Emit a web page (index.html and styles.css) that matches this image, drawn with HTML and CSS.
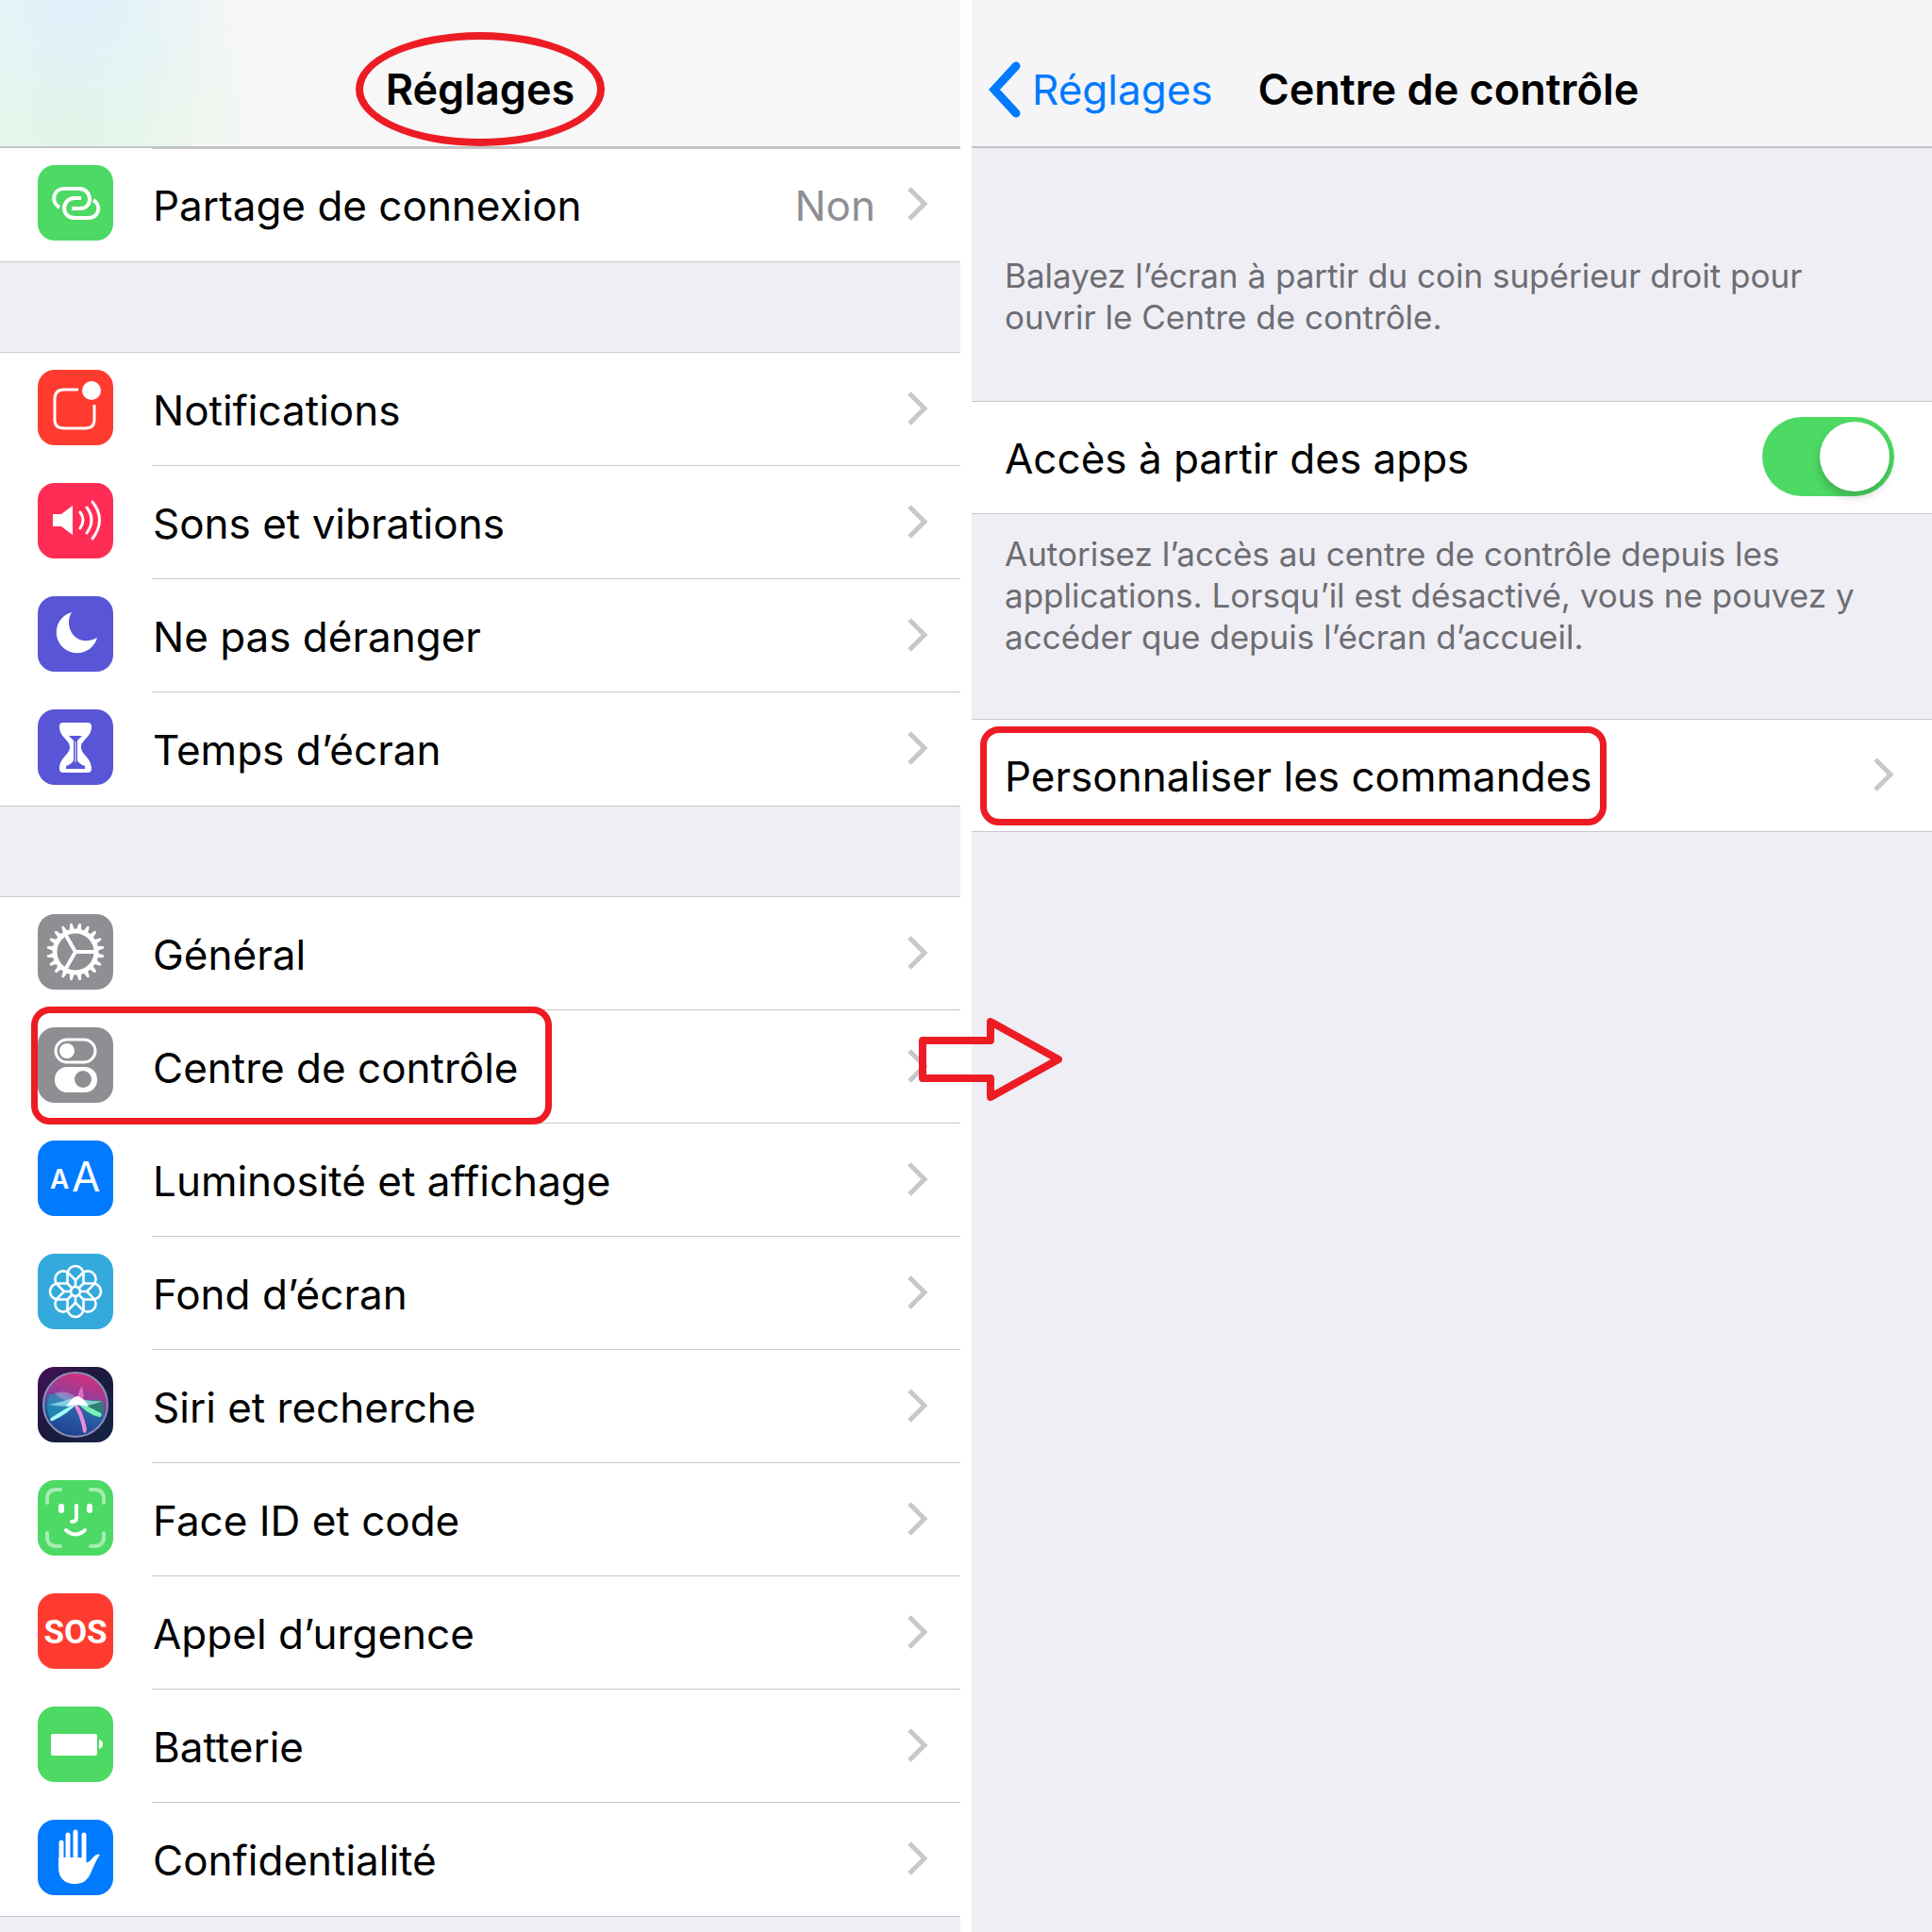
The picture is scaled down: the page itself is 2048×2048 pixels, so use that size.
FILE: index.html
```html
<!DOCTYPE html>
<html lang="fr">
<head>
    <meta charset="UTF-8">
    <title>Réglages</title>
    <link rel="stylesheet" href="styles.css">
</head>
<body>
    <svg class="defs" aria-hidden="true">
        <defs>
            <symbol id="chevron" viewBox="0 0 22 36">
                <path d="M2 2l16 16L2 34" fill="none" stroke="#c7c7cc" stroke-width="5"/>
            </symbol>
            <path id="tooth" d="M-2.8 -22 L-1.3 -30 Q0 -31 1.3 -30 L2.8 -22z"/>
            <path id="petal" d="M-8.5 -8.5V-18.5A8.5 8.5 0 0 1 8.5 -18.5V-8.5M0 -12V-5"/>
            <linearGradient id="siri-bg" x1=".6" y1="0" x2=".35" y2="1">
                <stop offset="0" stop-color="#d62f78"/>
                <stop offset=".4" stop-color="#8c3f9c"/>
                <stop offset=".6" stop-color="#2c5fa8"/>
                <stop offset="1" stop-color="#1d3f8c"/>
            </linearGradient>
            <linearGradient id="siri-tile" x1="0" y1="0" x2="1" y2="1">
                <stop offset="0" stop-color="#460f58"/>
                <stop offset=".45" stop-color="#1c1a3c"/>
                <stop offset="1" stop-color="#142447"/>
            </linearGradient>
        </defs>
    </svg>

    <div class="screens">
        <section class="screen">
            <header class="navbar navbar-tinted">
                <h1 class="title title-circled">Réglages</h1>
            </header>

            <nav class="group group-first">
                <a class="row" href="#partage">
                    <svg class="icon green" viewBox="0 0 80 80">
                        <g fill="none" stroke="#fff" stroke-width="4">
                            <path d="M23 45C13 38 17 25 28 25H44C58 25 59 46 45 46H36" stroke-linejoin="round"/>
                            <path d="M46 35H39C25 35 24 56 39 56H53C65 56 68 43 59 37" stroke-linejoin="round"/>
                        </g>
                    </svg>
                    <span class="label">Partage de connexion</span>
                    <span class="value">Non</span>
                    <svg class="chevron"><use href="#chevron"/></svg>
                </a>
            </nav>

            <nav class="group">
                <a class="row" href="#notifications">
                    <svg class="icon red" viewBox="0 0 80 80">
                        <path d="M43 21H28q-10 0-10 10v22q0 9 10 9h22q10 0 10-9V37" fill="none" stroke="#fff" stroke-width="3"/>
                        <circle cx="57" cy="22" r="10" fill="#fff"/>
                    </svg>
                    <span class="label">Notifications</span>
                    <svg class="chevron"><use href="#chevron"/></svg>
                </a>
                <a class="row" href="#sons">
                    <svg class="icon pink" viewBox="0 0 80 80">
                        <path d="M16 33h9l12-9v31l-12-9h-9z" fill="#fff"/>
                        <g fill="none" stroke="#fff" stroke-width="3" stroke-linecap="round">
                            <path d="M45 31q6 8 0 17"/>
                            <path d="M52 26q10 13 0 27"/>
                            <path d="M58 20q15 19 0 39"/>
                        </g>
                    </svg>
                    <span class="label">Sons et vibrations</span>
                    <svg class="chevron"><use href="#chevron"/></svg>
                </a>
                <a class="row" href="#ne-pas-deranger">
                    <svg class="icon purple" viewBox="0 0 80 80">
                        <path d="M36 17C27 31 39 56 63 44A22 22 0 1 1 36 17z" fill="#fff"/>
                    </svg>
                    <span class="label">Ne pas déranger</span>
                    <svg class="chevron"><use href="#chevron"/></svg>
                </a>
                <a class="row" href="#temps-ecran">
                    <svg class="icon purple" viewBox="0 0 80 80">
                        <path d="M27 14h26q4 0 4 4c0 12-11 14-11 22s11 11 11 23q0 4-4 4H27q-4 0-4-4c0-12 11-15 11-23S23 30 23 18q0-4 4-4z" fill="#fff"/>
                        <path d="M33 28h14l-5 5v21q2 4 8 6v3H30v-3q6-2 8-6V33z" fill="#5856d6"/>
                        <path d="M40 34v22" stroke="#fff" stroke-width="1"/>
                    </svg>
                    <span class="label">Temps d’écran</span>
                    <svg class="chevron"><use href="#chevron"/></svg>
                </a>
            </nav>

            <nav class="group">
                <a class="row" href="#general">
                    <svg class="icon gray" viewBox="0 0 80 80">
                        <g id="gear" transform="translate(40 40)"></g>
                    </svg>
                    <span class="label">Général</span>
                    <svg class="chevron"><use href="#chevron"/></svg>
                </a>
                <a class="row row-boxed" href="#centre">
                    <svg class="icon gray" viewBox="0 0 80 80">
                        <rect x="19" y="13" width="42" height="24" rx="12" fill="none" stroke="#fff" stroke-width="3"/>
                        <circle cx="31" cy="25" r="8" fill="#fff"/>
                        <rect x="18" y="42" width="45" height="27" rx="13" fill="#fff"/>
                        <circle cx="48" cy="55" r="9" fill="#8e8e93"/>
                    </svg>
                    <span class="label">Centre de contrôle</span>
                    <svg class="chevron"><use href="#chevron"/></svg>
                    <svg class="arrow" viewBox="0 0 152 88">
                        <path d="M4 24H76V4L148 44L76 84V64H4z" fill="none" stroke="#ed1c24" stroke-width="8" stroke-linejoin="round"/>
                    </svg>
                </a>
                <a class="row" href="#luminosite">
                    <svg class="icon blue" viewBox="0 0 80 80">
                        <text class="glyph-small" x="13" y="51">A</text>
                        <text class="glyph-large" x="36" y="54">A</text>
                    </svg>
                    <span class="label">Luminosité et affichage</span>
                    <svg class="chevron"><use href="#chevron"/></svg>
                </a>
                <a class="row" href="#fond">
                    <svg class="icon cyan" viewBox="0 0 80 80">
                        <g id="flower" transform="translate(40 40)" fill="none" stroke="#fff" stroke-width="2.6"></g>
                    </svg>
                    <span class="label">Fond d’écran</span>
                    <svg class="chevron"><use href="#chevron"/></svg>
                </a>
                <a class="row" href="#siri">
                    <svg class="icon" viewBox="0 0 80 80">
                        <rect width="80" height="80" fill="url(#siri-tile)"/>
                        <circle cx="40" cy="40" r="34" fill="url(#siri-bg)" stroke="#8a8fb5" stroke-width="2"/>
                        <path d="M40 36Q26 24 12 30Q8 46 14 56Q32 50 40 36z" fill="#1fa3bd" opacity=".6"/>
                        <path d="M42 36Q58 34 69 36Q72 46 66 54Q52 52 42 36z" fill="#1f8f6c" opacity=".8"/>
                        <path d="M18 28Q34 22 46 38Q30 40 18 28z" fill="#b7a6e0" opacity=".5"/>
                        <path d="M40 38Q44 24 47 20Q50 30 47 40z" fill="#f07cc0" opacity=".8"/>
                        <path d="M40 38Q48 46 52 66Q51 72 48 69Q46 54 38 40z" fill="#f08cd8"/>
                        <path d="M44 36Q32 50 16 57Q12 58 14 54Q30 44 44 36z" fill="#a4fff6"/>
                        <path d="M40 36Q54 42 67 49Q69 53 65 53Q52 50 40 36z" fill="#7df0c0"/>
                        <path d="M12 40Q30 36 40 32Q52 37 69 36Q56 42 44 41Q28 43 12 40z" fill="#a5eef5" opacity=".7"/>
                        <path d="M30 42Q38 30 43 31Q52 36 54 42Q42 38 30 42z" fill="#fff"/>
                    </svg>
                    <span class="label">Siri et recherche</span>
                    <svg class="chevron"><use href="#chevron"/></svg>
                </a>
                <a class="row" href="#face-id">
                    <svg class="icon green" viewBox="0 0 80 80">
                        <g fill="none" stroke="#fff" stroke-linecap="round">
                            <path d="M10 24v-4q0-10 10-10h4M56 10h4q10 0 10 10v4M70 56v4q0 10-10 10h-4M24 70h-4q-10 0-10-10v-4" stroke-width="4" opacity=".5"/>
                            <path d="M25 28v4M55 28v4" stroke-width="6"/>
                            <path d="M41 27v13q0 4-5 4" stroke-width="4"/>
                            <path d="M30 53q10 9 20 0" stroke-width="4"/>
                        </g>
                    </svg>
                    <span class="label">Face ID et code</span>
                    <svg class="chevron"><use href="#chevron"/></svg>
                </a>
                <a class="row" href="#urgence">
                    <svg class="icon red" viewBox="0 0 80 80">
                        <text class="glyph-sos" x="40" y="53">SOS</text>
                    </svg>
                    <span class="label">Appel d’urgence</span>
                    <svg class="chevron"><use href="#chevron"/></svg>
                </a>
                <a class="row" href="#batterie">
                    <svg class="icon green" viewBox="0 0 80 80">
                        <rect x="14" y="29" width="49" height="23" rx="2" fill="#fff"/>
                        <path d="M65 35q4 1 4 5t-4 5z" fill="#fff"/>
                    </svg>
                    <span class="label">Batterie</span>
                    <svg class="chevron"><use href="#chevron"/></svg>
                </a>
                <a class="row" href="#confidentialite">
                    <svg class="icon blue" viewBox="0 0 80 80">
                        <g stroke="#fff" stroke-width="5" stroke-linecap="round">
                            <path d="M25 24v24M32 16v30M40 13v30M49 16v30"/>
                        </g>
                        <path d="M22 40h29v5q3 1 6-3c3-4 5-6 9-5-5 7-8 16-11 22-4 7-9 9-16 9-11 0-17-7-17-17z" fill="#fff"/>
                    </svg>
                    <span class="label">Confidentialité</span>
                    <svg class="chevron"><use href="#chevron"/></svg>
                </a>
            </nav>
        </section>

        <section class="screen">
            <header class="navbar">
                <a class="back" href="#reglages">
                    <svg class="back-arrow" viewBox="0 0 34 60"><path d="M29 5L6 30l23 25" fill="none" stroke="#007aff" stroke-width="9" stroke-linecap="round"/></svg>
                    Réglages
                </a>
                <h1 class="title">Centre de contrôle</h1>
            </header>

            <p class="note note-top">Balayez l’écran à partir du coin supérieur droit pour ouvrir le Centre de contrôle.</p>

            <div class="group group-plain">
                <div class="row">
                    <label class="label" for="acces">Accès à partir des apps</label>
                    <input class="switch" type="checkbox" id="acces" checked>
                </div>
            </div>

            <p class="note">Autorisez l’accès au centre de contrôle depuis les applications. Lorsqu’il est désactivé, vous ne pouvez y accéder que depuis l’écran d’accueil.</p>

            <nav class="group group-plain">
                <a class="row" href="#personnaliser">
                    <span class="label label-boxed">Personnaliser les commandes</span>
                    <svg class="chevron"><use href="#chevron"/></svg>
                </a>
            </nav>
        </section>
    </div>

    <script>
        const gear = document.getElementById("gear");
        const flower = document.getElementById("flower");

        let teeth = "";
        for (let i = 0; i < 20; i++) {
            teeth += `<use href="#tooth" transform="rotate(${i * 18 + 9})"/>`;
        }
        gear.innerHTML = `
            <g fill="#fff">${teeth}</g>
            <circle r="22" fill="none" stroke="#fff" stroke-width="5"/>
            <path d="M0 0H22M0 0L-11 -19M0 0L-11 19" stroke="#fff" stroke-width="4"/>
        `;

        let petals = "";
        for (let i = 0; i < 8; i++) {
            petals += `<use href="#petal" transform="rotate(${i * 45})"/>`;
        }
        flower.innerHTML = petals + `<circle r="5"/>`;
    </script>
</body>
</html>
```
FILE: styles.css
```css
*,
*::before,
*::after {
    box-sizing: border-box;
}

body {
    margin: 0;
    background: #fff;
    color: #000;
    font-family: Inter, "Liberation Sans", sans-serif;
    font-size: 44px;
}

a {
    color: inherit;
    text-decoration: none;
}

.defs {
    position: absolute;
    width: 0;
    height: 0;
}

.screens {
    display: grid;
    grid-template-columns: 1fr 1fr;
    gap: 12px;
    min-height: 100vh;
}

.screen {
    background: #efeef5;
}

.navbar {
    display: flex;
    align-items: center;
    height: 157px;
    padding: 34px 18px 0;
    background: #f5f5f8;
    border-bottom: 2px solid #c3c3c6;
}

.navbar-tinted {
    justify-content: center;
    background:
        radial-gradient(circle at 80px 0, #dff0fb, transparent 180px),
        radial-gradient(circle at 70px 140px, #e0f6e2, transparent 220px),
        #f7f7f7;
}

.title {
    margin: 0;
    font-size: 45px;
    font-weight: 600;
}

.title-circled {
    position: relative;
}

.title-circled::after {
    content: "";
    position: absolute;
    inset: -33px -32px;
    border: 8px solid #ed1c24;
    border-radius: 50%;
}

.back {
    display: flex;
    align-items: center;
    gap: 12px;
    margin-right: 48px;
    color: #007aff;
}

.back-arrow {
    width: 34px;
    height: 60px;
}

.group {
    margin-bottom: 97px;
    background: #fff;
    box-shadow: 0 -1px 0 #c8c7cc, 0 1px 0 #c8c7cc;
}

.group-first {
    box-shadow: 0 1px 0 #c8c7cc;
}

.row {
    position: relative;
    display: flex;
    align-items: center;
    height: 120px;
    padding: 0 34px 0 40px;
}

/* separator starts at the label, not under the icon */
.row + .row::before,
.group-first .row::before {
    content: "";
    position: absolute;
    top: -1px;
    left: 161px;
    right: 0;
    height: 1px;
    background: #c8c7cc;
}

.group-first .row::before {
    top: 0;
}

.row-boxed::after {
    content: "";
    position: absolute;
    top: -4px;
    left: 33px;
    width: 552px;
    height: 125px;
    border: 7px solid #ed1c24;
    border-radius: 20px;
    z-index: 1;
}

.icon {
    width: 80px;
    height: 80px;
    margin-right: 42px;
    margin-bottom: 4px;
    border-radius: 18px;
}

.green { background: #4cd964; }
.red { background: #ff3b30; }
.pink { background: #ff2d55; }
.purple { background: #5856d6; }
.gray { background: #8e8e93; }
.blue { background: #007aff; }
.cyan { background: #34aadc; }

.glyph-small,
.glyph-large,
.glyph-sos {
    fill: #fff;
}

.glyph-small {
    font-size: 28px;
    font-weight: 600;
}

.glyph-large {
    font-size: 44px;
}

.glyph-sos {
    font-family: Roboto, sans-serif;
    font-size: 35px;
    font-weight: 700;
    text-anchor: middle;
}

.label {
    flex: 1;
    padding-top: 2px;
}

.value {
    margin-right: 34px;
    padding-top: 2px;
    color: #8e8e93;
}

.chevron {
    width: 22px;
    height: 36px;
    margin-bottom: 2px;
}

.arrow {
    position: absolute;
    top: 8px;
    right: -108px;
    width: 152px;
    height: 88px;
    z-index: 1;
}

.group-plain {
    margin-bottom: 0;
}

.group-plain .row {
    height: 118px;
    padding-left: 35px;
    padding-right: 40px;
}

.label-boxed {
    position: relative;
    flex: none;
    margin-right: auto;
}

.label-boxed::after {
    content: "";
    position: absolute;
    inset: -24px -15px -25px -26px;
    border: 7px solid #ed1c24;
    border-radius: 20px;
}

.note {
    margin: 0;
    padding: 21px 70px 66px 35px;
    color: #6d6d72;
    font-size: 35px;
    line-height: 44px;
}

.note-top {
    padding-top: 113px;
    padding-bottom: 68px;
}

.switch {
    appearance: none;
    display: flex;
    justify-content: flex-end;
    width: 140px;
    height: 84px;
    margin: 0 0 2px;
    padding: 5px;
    border-radius: 42px;
    background: #4cd964;
}

.switch::before {
    content: "";
    width: 74px;
    height: 74px;
    border-radius: 50%;
    background: #fff;
    box-shadow: 0 6px 10px rgba(0, 0, 0, 0.2);
}

.switch:not(:checked) {
    justify-content: flex-start;
    background: #e5e5ea;
}
```
